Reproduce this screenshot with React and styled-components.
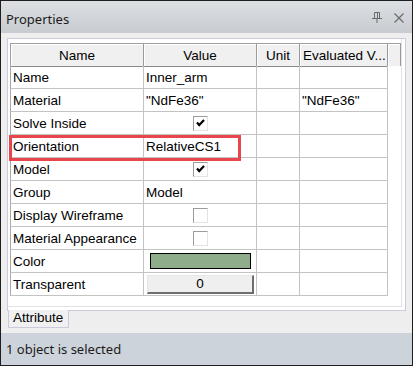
import React from "react";
import styled, { createGlobalStyle } from "styled-components";

const GlobalStyle = createGlobalStyle`
  html, body {
    margin: 0;
    padding: 0;
    background: #ffffff;
  }
  * {
    box-sizing: border-box;
  }
`;

const Window = styled.div`
  position: relative;
  width: 413px;
  height: 366px;
  border: 1px solid #1e1e1e;
  display: flex;
  flex-direction: column;
  background: #eeeeee;
  font-family: "Liberation Sans", Arial, sans-serif;
  font-size: 13.5px;
  color: #000;
`;

const TitleBar = styled.div`
  height: 32px;
  flex: none;
  display: flex;
  align-items: center;
  padding: 4px 8px 0 5px;
  background: linear-gradient(#dcdfe3, #c8cbd0);
`;

const Title = styled.div`
  flex: 1;
  font-family: "Noto Sans", "Open Sans", sans-serif;
  font-size: 13px;
  color: #1b1b1b;
`;

const TitleIcons = styled.div`
  display: flex;
  align-items: center;
  gap: 12px;
  margin-top: -3px;
`;

const Body = styled.div`
  flex: 1;
  padding: 5px 6px 0 6px;
  display: flex;
  flex-direction: column;
`;

const Frame = styled.div`
  height: 273px;
  border: 1px solid #cdc9de;
  background: #ffffff;
  padding: 4px 3px 0 2px;
  box-shadow: inset -3px -3px 0 #ffffff, inset -4px -4px 0 #e2e2e2;
`;

const Grid = styled.div`
  position: relative;
  display: grid;
  grid-template-columns: 134px 113px 43px 88px 13px;
  grid-auto-rows: 23px;
  width: 391px;
`;

const HeadCell = styled.div`
  height: 24px;
  background: #f0f0f0;
  border-top: 1px solid #a0a0a0;
  border-right: 1px solid #9a9a9a;
  border-bottom: 1px solid #8a8a8a;
  border-left: ${(p) => (p.$first ? "1px solid #a0a0a0" : "none")};
  box-shadow: inset 1px 1px 0 #ffffff;
  display: flex;
  align-items: center;
  justify-content: ${(p) => (p.$left ? "flex-start" : "center")};
  padding-left: ${(p) => (p.$left ? "3px" : "0")};
  white-space: nowrap;
  overflow: hidden;
`;

const Cell = styled.div`
  border-right: 1px solid #c3c3c3;
  border-bottom: 1px solid #c3c3c3;
  border-left: ${(p) => (p.$first ? "1px solid #a8a8a8" : "none")};
  display: flex;
  align-items: center;
  justify-content: ${(p) => (p.$center ? "center" : "flex-start")};
  padding-left: ${(p) => (p.$center ? "0" : "2px")};
  white-space: nowrap;
  overflow: hidden;
`;

const Filler = styled.div`
  background: #ffffff;
`;

const CheckBox = styled.div`
  width: 15px;
  height: 15px;
  background: #ffffff;
  border-top: 1px solid #9c9c9c;
  border-left: 1px solid #9c9c9c;
  border-right: 1px solid #e3e3e3;
  border-bottom: 1px solid #e3e3e3;
  display: flex;
  align-items: center;
  justify-content: center;
`;

const Swatch = styled.div`
  width: 101px;
  height: 16px;
  background: #8fad8b;
  border: 1px solid #000000;
`;

const ValueButton = styled.div`
  width: 107px;
  height: 19px;
  margin-left: 1px;
  background: #efefef;
  border-top: 1px solid #e6e6e6;
  border-left: 1px solid #e6e6e6;
  border-right: 2px solid #6e6e6e;
  border-bottom: 2px solid #6e6e6e;
  display: flex;
  align-items: center;
  justify-content: center;
`;

const Highlight = styled.div`
  position: absolute;
  left: -1px;
  top: 92px;
  width: 232px;
  height: 26px;
  border: 3px solid #e8454c;
  pointer-events: none;
`;

const TabStrip = styled.div`
  display: flex;
`;

const Tab = styled.div`
  position: relative;
  margin-top: -1px;
  margin-left: 1px;
  width: 61px;
  height: 18px;
  background: #f0f0f0;
  border: 1px solid #cdc9de;
  border-top: none;
  padding-left: 4px;
  line-height: 16px;
`;

const StatusBar = styled.div`
  height: 32px;
  flex: none;
  background: #cdd3da;
  display: flex;
  align-items: center;
  padding-left: 5px;
  font-family: "Noto Sans", "Open Sans", sans-serif;
  font-size: 13px;
  color: #1b1b1b;
`;

const PinIcon = () => (
  <svg width="10" height="11" viewBox="0 0 10 11">
    <path
      d="M2.5 0.5h5v6M2.5 0.5v6M5.5 0.5v6M0 6.5h10M5 6.5v4.5"
      fill="none"
      stroke="#6a6a6a"
      strokeWidth="1"
    />
  </svg>
);

const CloseIcon = () => (
  <svg width="10" height="10" viewBox="0 0 10 10">
    <path d="M0.5 0.5l9 9M9.5 0.5l-9 9" stroke="#6a6a6a" strokeWidth="1.2" />
  </svg>
);

const Check = () => (
  <svg width="9" height="8" viewBox="0 0 9 8">
    <path d="M1 3.5l2.2 2.5L8 1" fill="none" stroke="#000" strokeWidth="2.2" />
  </svg>
);

const rows = [
  { name: "Name", value: "Inner_arm" },
  { name: "Material", value: '"NdFe36"', evaluated: '"NdFe36"' },
  { name: "Solve Inside", check: true },
  { name: "Orientation", value: "RelativeCS1" },
  { name: "Model", check: true },
  { name: "Group", value: "Model" },
  { name: "Display Wireframe", check: false },
  { name: "Material Appearance", check: false },
  { name: "Color", swatch: true },
  { name: "Transparent", button: "0" },
];

const renderValue = (row) => {
  if (row.check !== undefined) {
    return (
      <Cell $center>
        <CheckBox>{row.check && <Check />}</CheckBox>
      </Cell>
    );
  }
  if (row.swatch) {
    return (
      <Cell $center>
        <Swatch />
      </Cell>
    );
  }
  if (row.button) {
    return (
      <Cell $center>
        <ValueButton>{row.button}</ValueButton>
      </Cell>
    );
  }
  return <Cell>{row.value}</Cell>;
};

export default function App() {
  return (
    <>
      <GlobalStyle />
      <Window>
        <TitleBar>
          <Title>Properties</Title>
          <TitleIcons>
            <PinIcon />
            <CloseIcon />
          </TitleIcons>
        </TitleBar>
        <Body>
          <Frame>
            <Grid>
              <HeadCell $first>Name</HeadCell>
              <HeadCell>Value</HeadCell>
              <HeadCell>Unit</HeadCell>
              <HeadCell $left>Evaluated V...</HeadCell>
              <HeadCell />
              {rows.map((row) => (
                <React.Fragment key={row.name}>
                  <Cell $first>{row.name}</Cell>
                  {renderValue(row)}
                  <Cell />
                  <Cell>{row.evaluated}</Cell>
                  <Filler />
                </React.Fragment>
              ))}
              <Highlight />
            </Grid>
          </Frame>
          <TabStrip>
            <Tab>Attribute</Tab>
          </TabStrip>
        </Body>
        <StatusBar>1 object is selected</StatusBar>
      </Window>
    </>
  );
}
